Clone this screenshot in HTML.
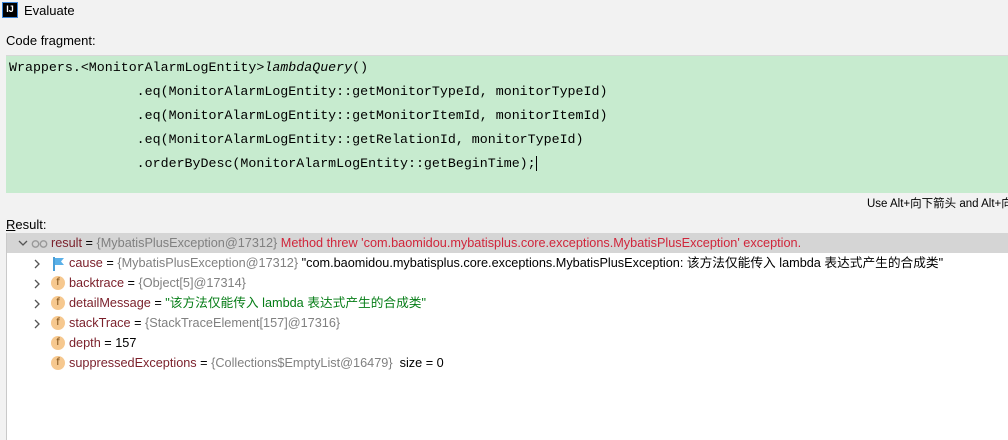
<!DOCTYPE html>
<html><head><meta charset="utf-8"><style>
*{margin:0;padding:0;box-sizing:border-box}
body{width:1008px;height:440px;background:#f2f2f2;font-family:"Liberation Sans","Noto Sans CJK SC",sans-serif;font-size:13px;color:#000;position:relative;overflow:hidden}
.abs{position:absolute;white-space:nowrap}
.code{position:absolute;left:6px;top:55px;width:1002px;height:138px;background:#c7ebcf;border-top:1px solid #d8d8d8;font-family:"Liberation Mono",monospace;font-size:13.3px;color:#000}
.code div{position:absolute;left:3px;white-space:pre;height:24px;line-height:24px}
.tree{position:absolute;left:6px;top:233px;width:1002px;height:207px;background:#fff;border-left:1px solid #c9c9c9}
.row{position:absolute;left:0;height:20px;line-height:20px;white-space:nowrap;width:1002px;font-size:12.7px}
.g{color:#808080}.s{color:#067d17}.r{color:#d0263b}
.n{color:#7a1f2a}
.f{position:absolute;width:14px;height:14px;border-radius:50%;background:#f6c88f;color:#7a4a10;font-size:10px;line-height:14px;text-align:center;top:3px;left:44px;font-family:"DejaVu Sans",sans-serif}
.arr{position:absolute;left:27px;top:6px}
</style></head><body>
<div class="abs" style="left:2px;top:2px;width:16px;height:16px;border:1px solid #3a84d8;background:#000;color:#fff;font-size:9px;font-weight:bold;line-height:13px;text-align:center">IJ</div>
<div class="abs" style="left:24px;top:3px;font-size:13px">Evaluate</div>
<div class="abs" style="left:6px;top:33px;font-size:13px">Code fragment:</div>
<div class="code">
<div style="top:0">Wrappers.&lt;MonitorAlarmLogEntity&gt;<i>lambdaQuery</i>()</div>
<div style="top:24px">                .eq(MonitorAlarmLogEntity::getMonitorTypeId, monitorTypeId)</div>
<div style="top:48px">                .eq(MonitorAlarmLogEntity::getMonitorItemId, monitorItemId)</div>
<div style="top:72px">                .eq(MonitorAlarmLogEntity::getRelationId, monitorTypeId)</div>
<div style="top:96px">                .orderByDesc(MonitorAlarmLogEntity::getBeginTime);<span style="border-left:1px solid #000"></span></div>
</div>
<div class="abs" style="left:867px;top:195px;font-size:11.5px">Use Alt+向下箭头 and Alt+向</div>
<div class="abs" style="left:6px;top:217px;font-size:13px"><u>R</u>esult:</div>
<div class="tree">
<div class="row" style="top:0;background:#d5d5d5"><svg class="abs" style="left:11px;top:7px" width="10" height="7"><path d="M1 1l4 4 4-4" stroke="#555" fill="none" stroke-width="1.3"/></svg><svg class="abs" style="left:24px;top:7px" width="18" height="8"><circle cx="4.5" cy="4" r="3.2" stroke="#999" fill="none" stroke-width="1.4"/><circle cx="12.5" cy="4" r="3.2" stroke="#999" fill="none" stroke-width="1.4"/></svg><span style="position:absolute;left:44px"><span class="n">result</span> = <span class="g">{MybatisPlusException@17312}</span> <span class="r">Method threw 'com.baomidou.mybatisplus.core.exceptions.MybatisPlusException' exception.</span></span></div>
<div class="row" style="top:20px"><svg class="arr" width="7" height="10"><path d="M1 1l4 4-4 4" stroke="#555" fill="none" stroke-width="1.3"/></svg><svg class="abs" style="left:46px;top:4px" width="12" height="14"><path d="M1 0v14" stroke="#4a9fd8" stroke-width="2"/><path d="M2 1h9l-3 3.5 3 3.5h-9z" fill="#5ab0e8"/></svg><span style="position:absolute;left:62px"><span class="n">cause</span> = <span class="g">{MybatisPlusException@17312}</span> "com.baomidou.mybatisplus.core.exceptions.MybatisPlusException: 该方法仅能传入 lambda 表达式产生的合成类"</span></div>
<div class="row" style="top:40px"><svg class="arr" width="7" height="10"><path d="M1 1l4 4-4 4" stroke="#555" fill="none" stroke-width="1.3"/></svg><span class="f">f</span><span style="position:absolute;left:62px"><span class="n">backtrace</span> = <span class="g">{Object[5]@17314}</span></span></div>
<div class="row" style="top:60px"><svg class="arr" width="7" height="10"><path d="M1 1l4 4-4 4" stroke="#555" fill="none" stroke-width="1.3"/></svg><span class="f">f</span><span style="position:absolute;left:62px"><span class="n">detailMessage</span> = <span class="s">"该方法仅能传入 lambda 表达式产生的合成类"</span></span></div>
<div class="row" style="top:80px"><svg class="arr" width="7" height="10"><path d="M1 1l4 4-4 4" stroke="#555" fill="none" stroke-width="1.3"/></svg><span class="f">f</span><span style="position:absolute;left:62px"><span class="n">stackTrace</span> = <span class="g">{StackTraceElement[157]@17316}</span></span></div>
<div class="row" style="top:100px"><span class="f">f</span><span style="position:absolute;left:62px"><span class="n">depth</span> = 157</span></div>
<div class="row" style="top:120px"><span class="f">f</span><span style="position:absolute;left:62px"><span class="n">suppressedExceptions</span> = <span class="g">{Collections$EmptyList@16479}</span>&nbsp; size = 0</span></div>
</div>
</body></html>
